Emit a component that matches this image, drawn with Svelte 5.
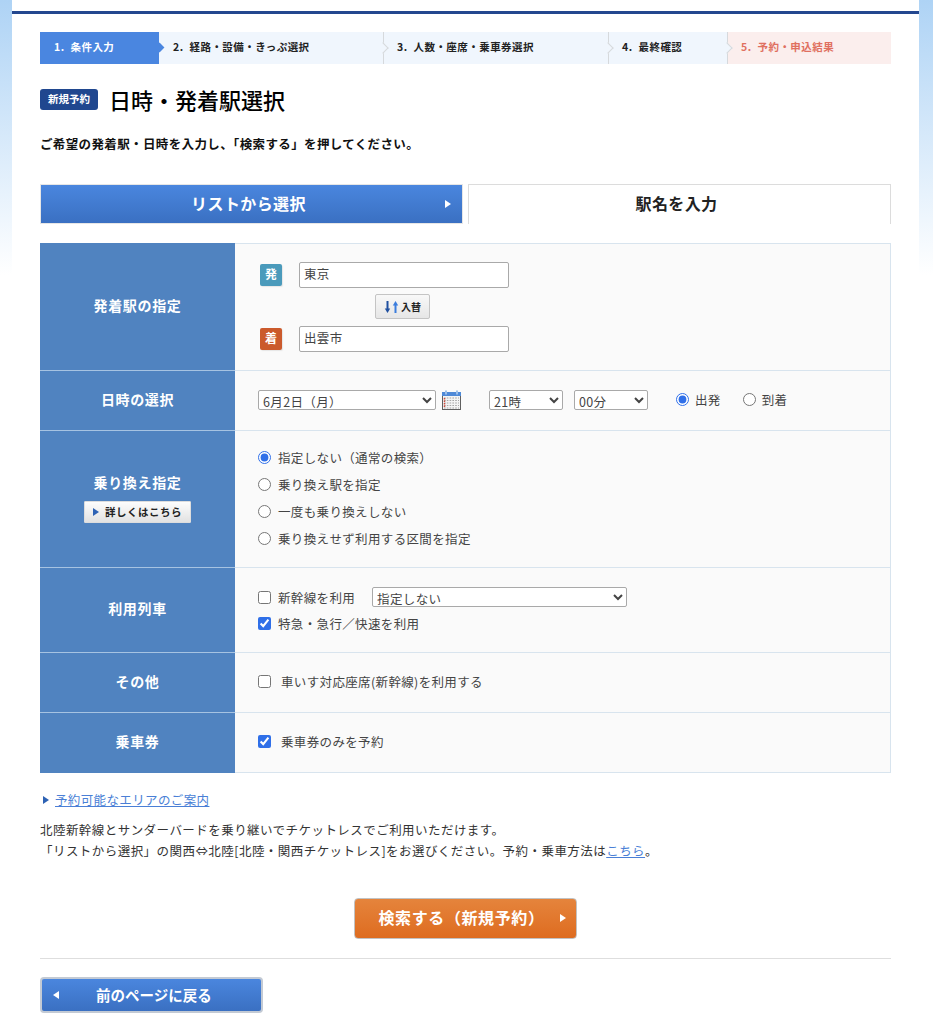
<script>
    const steps = [
        { label: "1.", text: "条件入力", width: 119, cls: "current" },
        { label: "2.", text: "経路・設備・きっぷ選択", width: 224 },
        { label: "3.", text: "人数・座席・乗車券選択", width: 225 },
        { label: "4.", text: "最終確認", width: 119 },
        { label: "5.", text: "予約・申込結果", width: 164, cls: "last" }
    ];
    const transfers = [
        "指定しない（通常の検索）",
        "乗り換え駅を指定",
        "一度も乗り換えしない",
        "乗り換えせず利用する区間を指定"
    ];
</script>

<div class="page">
    <ol class="steps">
        {#each steps as step}
            <li class="step {step.cls ?? ''}" style="width: {step.width}px">
                <span class="num">{step.label}</span>{step.text}
            </li>
        {/each}
    </ol>

    <div class="heading">
        <span class="badge">新規予約</span>
        <h1>日時・発着駅選択</h1>
    </div>
    <p class="lead">ご希望の発着駅・日時を入力し、「検索する」を押してください。</p>

    <div class="tabs">
        <div class="tab tab-list">
            <span>リストから選択</span>
            <i class="tri"></i>
        </div>
        <div class="tab tab-input"><span>駅名を入力</span></div>
    </div>

    <table>
        <tbody>
            <tr class="r1">
                <th>発着駅の指定</th>
                <td>
                    <div class="station">
                        <span class="mark dep">発</span>
                        <input type="text" value="東京" />
                    </div>
                    <button class="swap">
                        <svg width="15" height="14" viewBox="0 0 15 14">
                            <path d="M3.500 1v8" stroke="#1f4f9f" stroke-width="2" />
                            <path d="M0.800 8.500h5.400L3.500 13z" fill="#1f4f9f" />
                            <path d="M11.500 13V5" stroke="#3b7ddd" stroke-width="2" />
                            <path d="M8.800 5.500h5.400L11.500 1z" fill="#3b7ddd" />
                        </svg>
                        入替
                    </button>
                    <div class="station">
                        <span class="mark arr">着</span>
                        <input type="text" value="出雲市" />
                    </div>
                </td>
            </tr>
            <tr class="r2">
                <th>日時の選択</th>
                <td>
                    <div class="datetime">
                        <select class="date"><option>6月2日（月）</option></select>
                        <svg class="cal" width="21" height="21" viewBox="0 0 21 21">
                            <rect x="1.500" y="2.500" width="18" height="17" fill="#f4f4f4" stroke="#5f5f5f" />
                            <rect x="1" y="2" width="19" height="4" fill="#4f8ad8" />
                            <rect x="4" y="0.500" width="2" height="4" fill="#9dbfe8" />
                            <rect x="15" y="0.500" width="2" height="4" fill="#9dbfe8" />
                            <path d="M3 8h15M3 10.500h15M3 13h15M3 15.500h15M3 18h15" stroke="#a5a5a5" stroke-dasharray="1.600 1.200" />
                            <path d="M3.500 8v10" stroke="#d0493a" stroke-width="1.500" stroke-dasharray="1.500 1" />
                        </svg>
                        <select class="hour"><option>21時</option></select>
                        <select class="minute"><option>00分</option></select>
                        <label class="dep-radio"><input type="radio" name="when" checked />出発</label>
                        <label class="arr-radio"><input type="radio" name="when" />到着</label>
                    </div>
                </td>
            </tr>
            <tr class="r3">
                <th>
                    乗り換え指定
                    <button class="detail"><i></i>詳しくはこちら</button>
                </th>
                <td>
                    <div class="transfers">
                        {#each transfers as t, i}
                            <label><input type="radio" name="transfer" checked={i === 0} />{t}</label>
                        {/each}
                    </div>
                </td>
            </tr>
            <tr class="r4">
                <th>利用列車</th>
                <td>
                    <div class="trains">
                        <div class="shinkansen">
                            <label><input type="checkbox" />新幹線を利用</label>
                            <select><option>指定しない</option></select>
                        </div>
                        <label><input type="checkbox" checked />特急・急行／快速を利用</label>
                    </div>
                </td>
            </tr>
            <tr class="r5">
                <th>その他</th>
                <td><label class="wide"><input type="checkbox" />車いす対応座席(新幹線)を利用する</label></td>
            </tr>
            <tr class="r6">
                <th>乗車券</th>
                <td><label class="wide"><input type="checkbox" checked />乗車券のみを予約</label></td>
            </tr>
        </tbody>
    </table>

    <p class="area"><i></i><a href="#area">予約可能なエリアのご案内</a></p>
    <p class="note">
        北陸新幹線とサンダーバードを乗り継いでチケットレスでご利用いただけます。<br />
        「リストから選択」の関西⇔北陸[北陸・関西チケットレス]をお選びください。予約・乗車方法は<a href="#how">こちら</a>。
    </p>

    <div class="submit-wrap">
        <button class="submit">
            <span>検索する（新規予約）</span>
            <i class="tri"></i>
        </button>
    </div>

    <hr />

    <button class="back">
        <i></i>
        <span>前のページに戻る</span>
    </button>
</div>

<style>
    :global(body) {
        background: linear-gradient(#aed3f5 0, #ffffff 275px) no-repeat;
        font-family: "Noto Sans CJK JP", "Noto Sans", sans-serif;
        color: #333;
    }
    .page {
        box-sizing: border-box;
        width: 907px;
        height: 1024px;
        margin-left: 12px;
        padding: 32px 28px 0;
        background: linear-gradient(#fff 11px, #23478f 11px, #23478f 14px, #fff 14px);
        overflow: hidden;
    }
    .steps {
        display: flex;
        list-style: none;
        margin: 0;
        padding: 0;
        height: 32px;
    }
    .step {
        position: relative;
        box-sizing: border-box;
        display: flex;
        align-items: center;
        padding: 0 0 3px 14px;
        background: #f0f6fd;
        color: #222;
        font-size: 10.5px;
        font-weight: 700;
        letter-spacing: 0.45px;
    }
    .step::before {
        content: "";
        position: absolute;
        right: -1px;
        top: 0;
        bottom: 0;
        width: 1px;
        background: #d6d9dc;
        z-index: 1;
    }
    .step::after {
        content: "";
        position: absolute;
        right: -4px;
        top: 12px;
        width: 7px;
        height: 7px;
        background: #f0f6fd;
        border-top: 1px solid #d6d9dc;
        border-right: 1px solid #d6d9dc;
        transform: rotate(45deg);
        z-index: 1;
    }
    .num {
        margin-right: 6px;
    }
    .current {
        background: #4a86e0;
        color: #fff;
    }
    .current::before {
        display: none;
    }
    .current::after {
        right: -4px;
        background: #4a86e0;
        border: 0;
    }
    .last {
        background: #fbeeed;
        color: #e0705f;
    }
    .last::before,
    .last::after {
        display: none;
    }
    .heading {
        display: flex;
        align-items: center;
        gap: 11px;
        margin-top: 21px;
        height: 28px;
    }
    .badge {
        box-sizing: border-box;
        width: 58px;
        height: 21px;
        border-radius: 3px;
        background: #20478f;
        color: #fff;
        font-size: 10.5px;
        font-weight: 700;
        line-height: 19px;
        text-align: center;
    }
    h1 {
        margin: 0;
        color: #000;
        font-size: 22px;
        font-weight: 500;
        line-height: 28px;
    }
    .lead {
        margin: 21px 0 0;
        color: #111;
        font-size: 12.5px;
        font-weight: 700;
        line-height: 20px;
        letter-spacing: 0.37px;
    }
    .tabs {
        display: flex;
        justify-content: space-between;
        margin-top: 30px;
    }
    .tab {
        box-sizing: border-box;
        position: relative;
        width: 423px;
        height: 40px;
        display: flex;
        align-items: center;
        justify-content: center;
        font-size: 16px;
        font-weight: 700;
        letter-spacing: 0.4px;
    }
    .tab-list {
        background: linear-gradient(#4a86de, #3a70c2);
        color: #fff;
        border: 1px solid #e6e6e6;
    }
    .tab-list span {
        transform: translate(-3px, -1px);
    }
    .tab-input {
        color: #222;
        background: #fff;
        border: 1px solid #dcdcdc;
        border-bottom: 0;
    }
    .tab-input span {
        transform: translate(-3px, -2px);
    }
    .tri {
        position: absolute;
        width: 0;
        height: 0;
        border-left: 6px solid #fff;
        border-top: 4px solid transparent;
        border-bottom: 4px solid transparent;
    }
    .tab-list .tri {
        right: 11px;
        top: 15px;
    }
    table {
        width: 851px;
        margin-top: 19px;
        border-collapse: collapse;
        table-layout: fixed;
        font-size: 12.5px;
    }
    th {
        width: 193px;
        padding: 0 0 4px;
        background: #5083c0;
        color: #fff;
        font-size: 14px;
        font-weight: 700;
        letter-spacing: 0.65px;
        border: 1px solid #a6c3e2;
        border-left-color: #5083c0;
        border-right-color: #5083c0;
    }
    .r1 th {
        border-top-color: #5083c0;
    }
    .r6 th {
        border-bottom-color: #5083c0;
    }
    td {
        padding: 0 0 0 23px;
        background: #fafafa;
        border: 1px solid #d8e4ee;
    }
    .r1 { height: 127px; }
    .r2 { height: 60px; }
    .r3 { height: 137px; }
    .r4 { height: 85px; }
    .r5 { height: 60px; }
    .r6 { height: 60px; }
    label {
        display: flex;
        align-items: center;
        letter-spacing: 0.35px;
        color: #444;
    }
    input[type="radio"],
    input[type="checkbox"] {
        width: 13px;
        height: 13px;
        margin: 0 7px 0 0;
        flex: none;
        accent-color: #2f6fe8;
    }
    input[type="text"] {
        box-sizing: border-box;
        width: 210px;
        height: 26px;
        margin: 0;
        padding: 0 4px 3px;
        border: 1px solid #a9a9a9;
        border-radius: 2px;
        background: #fff;
        color: #444;
        font: inherit;
        letter-spacing: 0.35px;
    }
    select {
        box-sizing: border-box;
        height: 20px;
        margin: 0;
        border: 1px solid #a9a9a9;
        border-radius: 2px;
        background-color: #fff;
        color: #444;
        font: inherit;
        letter-spacing: 0.35px;
    }
    .station {
        display: flex;
        align-items: center;
        gap: 17px;
        margin-left: 2px;
    }
    .mark {
        box-sizing: border-box;
        width: 22px;
        height: 22px;
        border-radius: 2px;
        color: #fff;
        font-size: 12px;
        font-weight: 700;
        line-height: 19px;
        text-align: center;
        box-shadow: 1px 1px 1px #e6e6e6;
    }
    .dep { background: #4a9abb; }
    .arr { background: #cb5a2c; }
    .swap {
        display: flex;
        align-items: center;
        justify-content: center;
        gap: 2px;
        box-sizing: border-box;
        width: 55px;
        height: 25px;
        margin: 6px 0 7px 117px;
        padding: 0;
        border: 1px solid #c4c4c4;
        border-radius: 2px;
        background: linear-gradient(#f8f8f8, #e6e6e6);
        color: #222;
        font: 700 10px "Noto Sans CJK JP", sans-serif;
    }
    .datetime {
        display: flex;
        align-items: center;
        margin-bottom: 2px;
    }
    .date { width: 178px; }
    .cal { margin: 2px 0 0 5px; }
    .hour { width: 74px; margin-left: 27px; }
    .minute { width: 74px; margin-left: 11px; }
    .dep-radio { margin-left: 28px; }
    .arr-radio { margin-left: 22px; }
    .datetime label input { margin-right: 6px; }
    .detail {
        display: flex;
        align-items: center;
        justify-content: center;
        box-sizing: border-box;
        width: 107px;
        height: 22px;
        margin: 9px auto 0;
        padding: 0;
        border: 1px solid #ddd;
        border-radius: 1px;
        background: linear-gradient(#fdfdfd, #e2e2e2);
        color: #222;
        font: 700 10.5px "Noto Sans CJK JP", sans-serif;
        letter-spacing: 0.5px;
    }
    .detail i {
        width: 0;
        height: 0;
        margin-right: 6px;
        border-left: 6px solid #2d62b4;
        border-top: 4px solid transparent;
        border-bottom: 4px solid transparent;
    }
    .transfers {
        display: flex;
        flex-direction: column;
        gap: 8px;
        margin-bottom: 2px;
    }
    .transfers label {
        height: 19px;
    }
    .trains {
        display: flex;
        flex-direction: column;
        gap: 7px;
    }
    .shinkansen {
        display: flex;
        align-items: center;
        gap: 17px;
    }
    .shinkansen select {
        width: 255px;
    }
    .wide {
        margin-bottom: 2px;
    }
    .wide input {
        margin-right: 10px;
    }
    .area {
        display: flex;
        align-items: center;
        margin: 17px 0 0;
        font-size: 12.5px;
        line-height: 20px;
        letter-spacing: 0.37px;
    }
    .area i {
        width: 0;
        height: 0;
        margin: 0 6px 0 3px;
        border-left: 6px solid #2d62b4;
        border-top: 4px solid transparent;
        border-bottom: 4px solid transparent;
    }
    a {
        color: #4a7fd6;
        text-decoration: underline;
    }
    .note {
        margin: 9px 0 0;
        font-size: 12.5px;
        line-height: 21px;
        letter-spacing: 0.45px;
    }
    .submit-wrap {
        display: flex;
        justify-content: center;
        margin-top: 37px;
    }
    .submit {
        position: relative;
        box-sizing: border-box;
        width: 223px;
        height: 41px;
        padding: 0 8px 3px 0;
        border: 1px solid #c2c2c2;
        border-radius: 4px;
        background: linear-gradient(#e5843c, #de6c20);
        color: #fff;
        font: 700 16px "Noto Sans CJK JP", sans-serif;
        letter-spacing: 0.6px;
    }
    .submit .tri {
        right: 10px;
        top: 15px;
    }
    hr {
        margin: 19px 0 0;
        border: 0;
        border-top: 1px solid #dedede;
    }
    .back {
        display: flex;
        align-items: center;
        box-sizing: border-box;
        width: 223px;
        height: 36px;
        margin-top: 18px;
        padding: 0 0 0 11px;
        border: 2px solid #c3cad4;
        border-radius: 4px;
        background: linear-gradient(#4a86de, #3a70c2);
        color: #fff;
        font: 700 14.5px "Noto Sans CJK JP", sans-serif;
    }
    .back i {
        width: 0;
        height: 0;
        border-right: 6px solid #fff;
        border-top: 4px solid transparent;
        border-bottom: 4px solid transparent;
    }
    .back span {
        margin-left: 37px;
        transform: translateY(-1px);
    }
</style>
